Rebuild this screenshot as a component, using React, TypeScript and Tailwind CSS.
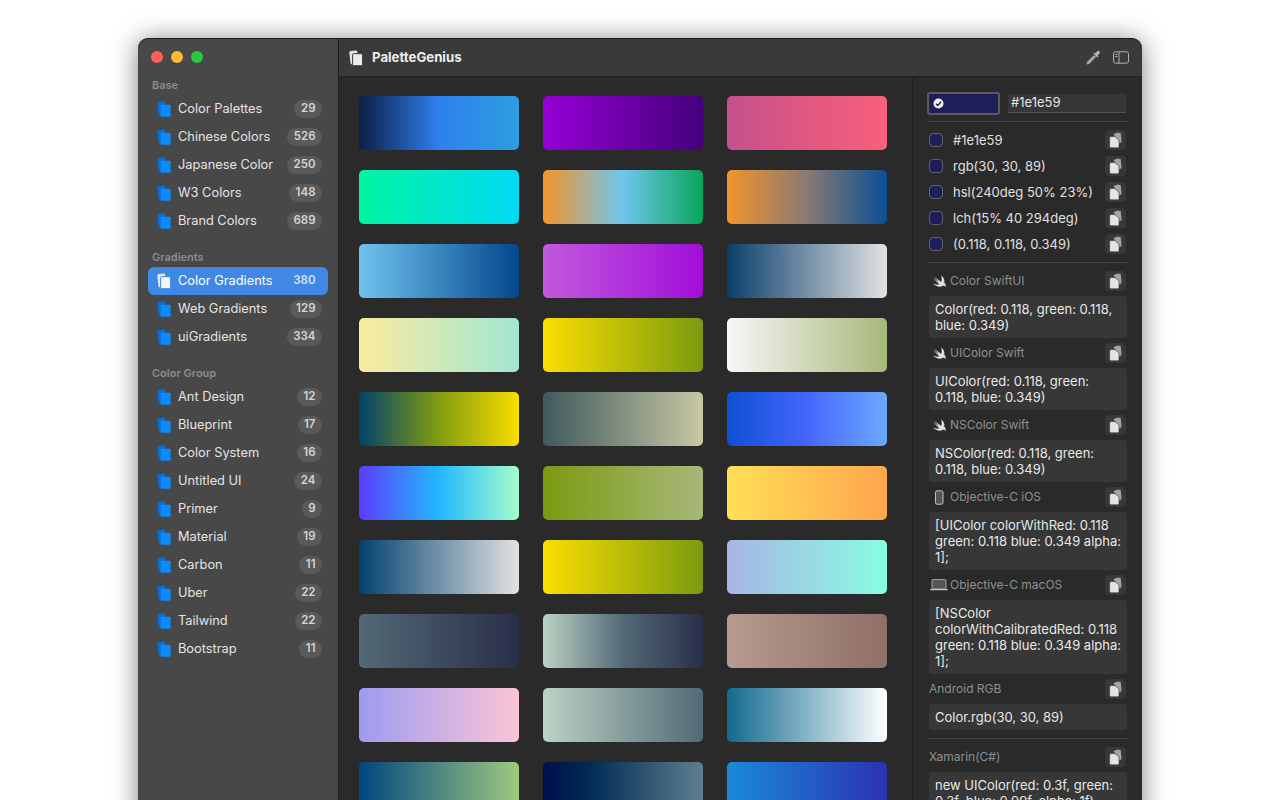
const FONT = "font-['Inter','Liberation_Sans',sans-serif]";

function Docs({ color = "#0a8cff", back = "#0a70d2", gap }: { color?: string; back?: string; gap?: string }) {
  return (
    <svg width="15" height="16" viewBox="0 0 15 16" className="shrink-0">
      <path d="M1.300 2.600 Q1.200 1.300 2.600 1 L7.500 .4 Q9 .4 9.300 1.800 L10 13 L4.200 14.400 Q2.600 14.400 2.400 13Z" fill={back} />
      <rect x="4.600" y="3.700" width="10" height="12" rx="1.200" fill={color} stroke={gap} strokeWidth={gap ? 1 : 0} />
    </svg>
  );
}

function Item({ label, n, active }: { label: string; n: number; active?: boolean }) {
  return (
    <div className={`flex h-7 items-center rounded-md pl-[8px] pr-[6px] ${active ? "bg-[#4088e4]" : ""}`}>
      {active ? <Docs color="#f6f6f6" back="#dfe8f7" gap="#4088e4" /> : <Docs />}
      <span className={`ml-[7px] flex-1 text-[12.8px] ${active ? "text-white" : "text-[#e4e4e4]"}`}>{label}</span>
      <span className={`flex h-[18px] items-center rounded-full px-[6.5px] text-[11.5px] font-semibold ${active ? "text-[#cfe0f8]" : "bg-[#5a5a5a] text-[#d4d4d4]"}`}>{n}</span>
    </div>
  );
}

function Section({ title, items, active }: { title: string; items: [string, number][]; active?: string }) {
  return (
    <div className="mb-[13px]">
      <div className="mb-px flex h-[18px] items-center pl-[4px] text-[11px] font-semibold text-[#8d8d8d]">{title}</div>
      {items.map(([l, n]) => (
        <Item key={l} label={l} n={n} active={l === active} />
      ))}
    </div>
  );
}

function Copy() {
  return (
    <div className="mr-px flex h-5 w-[21px] shrink-0 items-center justify-center rounded bg-[#383838]">
      <svg width="13" height="16" viewBox="0 0 13 16">
        <path d="M4.500 2 L9 .5 L11.800 1.200 L12.600 10 L10.600 11.500Z" fill="#a4a4a4" />
        <path d="M.6 6 Q.6 4.600 2 4.600 L5.800 4.600 L10 8 L10 14.600 Q10 15.800 8.800 15.800 L2 15.800 Q.6 15.800 .6 14.400Z" fill="#e4e4e4" stroke="#383838" strokeWidth=".6" />
      </svg>
    </div>
  );
}

function Swift() {
  return (
    <svg width="15" height="13" viewBox="0 0 15 13" className="shrink-0">
      <path d="M9 .5C11.800 2.400 13 5.200 12.200 7.600 13.500 9 14.200 10.800 13.700 12.300 12.900 10.900 11.600 10.600 10.500 11.100 7.600 12.500 3.400 11.500.8 8 2.800 9.600 5.400 10.200 7.400 9.200 5 7.400 2.800 5 1.200 2.600 3 4.400 5.400 6.200 7.200 7.400 5.600 5.600 4 3.600 3 1.800 5 3.800 7.400 5.800 9.200 6.900 9.900 5 9.800 2.600 9 .5Z" fill="#dedede" />
    </svg>
  );
}

function Phone() {
  return (
    <svg width="15" height="15" viewBox="0 0 15 15" className="shrink-0">
      <rect x="3.500" y=".8" width="7.500" height="13.400" rx="1.500" fill="#555" stroke="#c4c4c4" strokeWidth="1" />
    </svg>
  );
}

function Laptop() {
  return (
    <svg width="18" height="12" viewBox="0 0 18 12" className="-ml-[2px] mr-[-1px] shrink-0">
      <rect x="2" y=".6" width="14" height="9.400" rx=".8" fill="#555" stroke="#bdbdbd" strokeWidth=".8" />
      <rect x="0" y="10" width="18" height="1.300" rx=".6" fill="#c4c4c4" />
    </svg>
  );
}

function ColorRow({ text }: { text: string }) {
  return (
    <div className="flex h-[26px] items-center">
      <span className="h-[14px] w-[14px] rounded-[4px] border-[1.5px] border-[#626262] bg-[#1e1e5c]" />
      <span className="ml-[10px] flex-1 pt-px text-[13px] text-[#e0e0e0]">{text}</span>
      <Copy />
    </div>
  );
}

function CodeHead({ icon, label }: { icon?: React.ReactNode; label: string }) {
  return (
    <div className="flex h-5 items-center">
      {icon && <span className="mr-[3px] ml-[3px] flex">{icon}</span>}
      <span className="flex-1 text-[12px] text-[#8f8f8f]">{label}</span>
      <Copy />
    </div>
  );
}

function Code({ children }: { children: React.ReactNode }) {
  return <div className="mt-[5px] mb-[5px] rounded-[3px] bg-[#373737] px-[6px] py-[5px] text-[13px] leading-4 text-[#e8e8e8]">{children}</div>;
}

const SWATCHES: string[] = [
  "linear-gradient(90deg,#0a1f45 0%,#2f80ee 50%,#2d9ee0 100%)",
  "linear-gradient(90deg,#9600d6,#44007c)",
  "linear-gradient(90deg,#c6508c,#f9607a)",
  "linear-gradient(90deg,#00f5a0,#00d9f5)",
  "linear-gradient(90deg,#f2952b 0%,#6fc5ee 50%,#07a658 100%)",
  "linear-gradient(90deg,#f3942a 0%,#887a74 50%,#0a4f95 100%)",
  "linear-gradient(90deg,#70c3ee,#03478d)",
  "linear-gradient(90deg,#c259de,#a10ed8)",
  "linear-gradient(90deg,#0a3f6c,#e2e2e2)",
  "linear-gradient(90deg,#faeb9f,#a1e6d2)",
  "linear-gradient(90deg,#fbde00,#7b9a10)",
  "linear-gradient(90deg,#f7f7f7,#a7b87a)",
  "linear-gradient(90deg,#03416b 0%,#829d10 50%,#fbde00 100%)",
  "linear-gradient(90deg,#3f5a5c,#c8c8a5)",
  "linear-gradient(90deg,#0d50d4 0%,#4466fb 50%,#6ba9ff 100%)",
  "linear-gradient(90deg,#5b3dfb 0%,#22b8ff 50%,#a6fecb 100%)",
  "linear-gradient(90deg,#7b9a10,#a7b87a)",
  "linear-gradient(90deg,#ffdf56,#ffa64d)",
  "linear-gradient(90deg,#03426f,#e2e2e2)",
  "linear-gradient(90deg,#fbde00,#7b9a10)",
  "linear-gradient(90deg,#a8b5e4,#88fde3)",
  "linear-gradient(90deg,#536976,#292e49)",
  "linear-gradient(90deg,#bbd2c5,#536976 50%,#292e49)",
  "linear-gradient(90deg,#b79a90,#8f6f67)",
  "linear-gradient(90deg,#9d9bf0,#fbc5d6)",
  "linear-gradient(90deg,#bbd2c5,#536976)",
  "linear-gradient(90deg,#106a8e,#ffffff)",
  "linear-gradient(90deg,#01467f,#a0c880)",
  "linear-gradient(90deg,#000f4a,#002c55 30%,#5f7f8f)",
  "linear-gradient(90deg,#1a8ad8,#2b32b2)",
];

export default function App() {
  return (
    <div className={`h-[800px] w-[1280px] overflow-hidden bg-white pt-[38px] ${FONT}`}>
      <div className="mx-auto flex h-[800px] w-[1004px] overflow-hidden rounded-t-[10px] border-t border-[#1c1c1c] bg-[#2a2a2a] shadow-[0_2px_26px_rgba(0,0,0,0.5)]">
        <aside className="w-[200px] shrink-0 bg-[#484848] px-[10px]">
          <div className="mb-px flex h-9 items-center gap-2 pl-[3px]">
            <span className="h-3 w-3 rounded-full bg-[#ff5f57]" />
            <span className="h-3 w-3 rounded-full bg-[#febc2e]" />
            <span className="h-3 w-3 rounded-full bg-[#28c840]" />
          </div>
          <Section title="Base" items={[["Color Palettes", 29], ["Chinese Colors", 526], ["Japanese Color", 250], ["W3 Colors", 148], ["Brand Colors", 689]]} />
          <Section title="Gradients" active="Color Gradients" items={[["Color Gradients", 380], ["Web Gradients", 129], ["uiGradients", 334]]} />
          <Section title="Color Group" items={[["Ant Design", 12], ["Blueprint", 17], ["Color System", 16], ["Untitled UI", 24], ["Primer", 9], ["Material", 19], ["Carbon", 11], ["Uber", 22], ["Tailwind", 22], ["Bootstrap", 11]]} />
        </aside>
        <div className="flex min-w-0 flex-1 flex-col border-l border-[#1e1e1e]">
          <header className="flex h-[38px] shrink-0 items-center border-b border-[#222] bg-[#3a3a3a] pl-[9px] pr-[13px]">
            <Docs color="#ececec" back="#e4e4e4" gap="#3a3a3a" />
            <span className="ml-[9px] flex-1 text-[13.2px] font-bold text-[#ececec]">PaletteGenius</span>
            <svg width="16" height="16" viewBox="0 0 16 16" className="mr-[12px]">
              <path d="M1.500 14.500 L2 12 L9 5 L11 7 L4 14Z" fill="#a8a8a8" />
              <path d="M8.500 3.500 L12.500 7.500 L13.500 6.500 L12.500 5.500 L14.500 3.500 Q15.500 1.800 14 1 Q13 .4 12 1.500 L10.500 3.500 L9.500 2.500Z" fill="#b8b8b8" />
            </svg>
            <svg width="16" height="13" viewBox="0 0 16 13" fill="none" stroke="#b0b0b0" strokeWidth="1">
              <rect x=".5" y=".8" width="15" height="11.400" rx="2" />
              <path d="M6 .8V12.200M2.200 3.500H4.400M2.200 5.500H4.400" />
            </svg>
          </header>
          <div className="flex min-h-0 flex-1">
            <main className="grid w-[573px] shrink-0 grid-cols-[160px_160px_160px] content-start gap-x-6 gap-y-5 overflow-hidden px-5 pt-[19px]">
              {SWATCHES.map((g, i) => (
                <div key={i} className="h-[54px] rounded-[5px]" style={{ background: g }} />
              ))}
            </main>
            <section className="min-w-0 flex-1 border-l border-[#1e1e1e] pl-[16px] pr-[15px] pt-[14px]">
              <div className="-ml-[2px] flex h-6 items-center gap-[8px]">
                <div className="flex h-[23px] w-[73px] items-center rounded-[3px] border-2 border-[#5c5c5c] bg-[#1e1e59] pl-[4px]">
                  <svg width="11" height="11" viewBox="0 0 11 11">
                    <circle cx="5.500" cy="5.500" r="5" fill="#f2f2f2" />
                    <path d="M3 5.800 L4.800 7.500 L8 3.800" stroke="#1e1e59" strokeWidth="1.400" fill="none" />
                  </svg>
                </div>
                <div className="mr-px flex h-[19px] flex-1 items-center border-b border-[#555] bg-[#363636] pl-[3px] text-[13px] text-[#e4e4e4]">#1e1e59</div>
              </div>
              <div className="mt-[6px] mb-[5px] h-px bg-[#444]" />
              {["#1e1e59", "rgb(30, 30, 89)", "hsl(240deg 50% 23%)", "lch(15% 40 294deg)", "(0.118, 0.118, 0.349)"].map((t) => (
                <ColorRow key={t} text={t} />
              ))}
              <div className="mt-[5px] mb-[8px] h-px bg-[#444]" />
              <CodeHead icon={<Swift />} label="Color SwiftUI" />
              <Code>Color(red: 0.118, green: 0.118, blue: 0.349)</Code>
              <CodeHead icon={<Swift />} label="UIColor Swift" />
              <Code>UIColor(red: 0.118, green: 0.118, blue: 0.349)</Code>
              <CodeHead icon={<Swift />} label="NSColor Swift" />
              <Code>NSColor(red: 0.118, green: 0.118, blue: 0.349)</Code>
              <CodeHead icon={<Phone />} label="Objective-C iOS" />
              <Code>[UIColor colorWithRed: 0.118 green: 0.118 blue: 0.349 alpha: 1];</Code>
              <CodeHead icon={<Laptop />} label="Objective-C macOS" />
              <Code>[NSColor colorWithCalibratedRed: 0.118 green: 0.118 blue: 0.349 alpha: 1];</Code>
              <CodeHead label="Android RGB" />
              <Code>Color.rgb(30, 30, 89)</Code>
              <div className="mt-[8px] mb-[8px] h-px bg-[#444]" />
              <CodeHead label="Xamarin(C#)" />
              <Code>new UIColor(red: 0.3f, green: 0.3f, blue: 0.99f, alpha: 1f)</Code>
            </section>
          </div>
        </div>
      </div>
    </div>
  );
}
